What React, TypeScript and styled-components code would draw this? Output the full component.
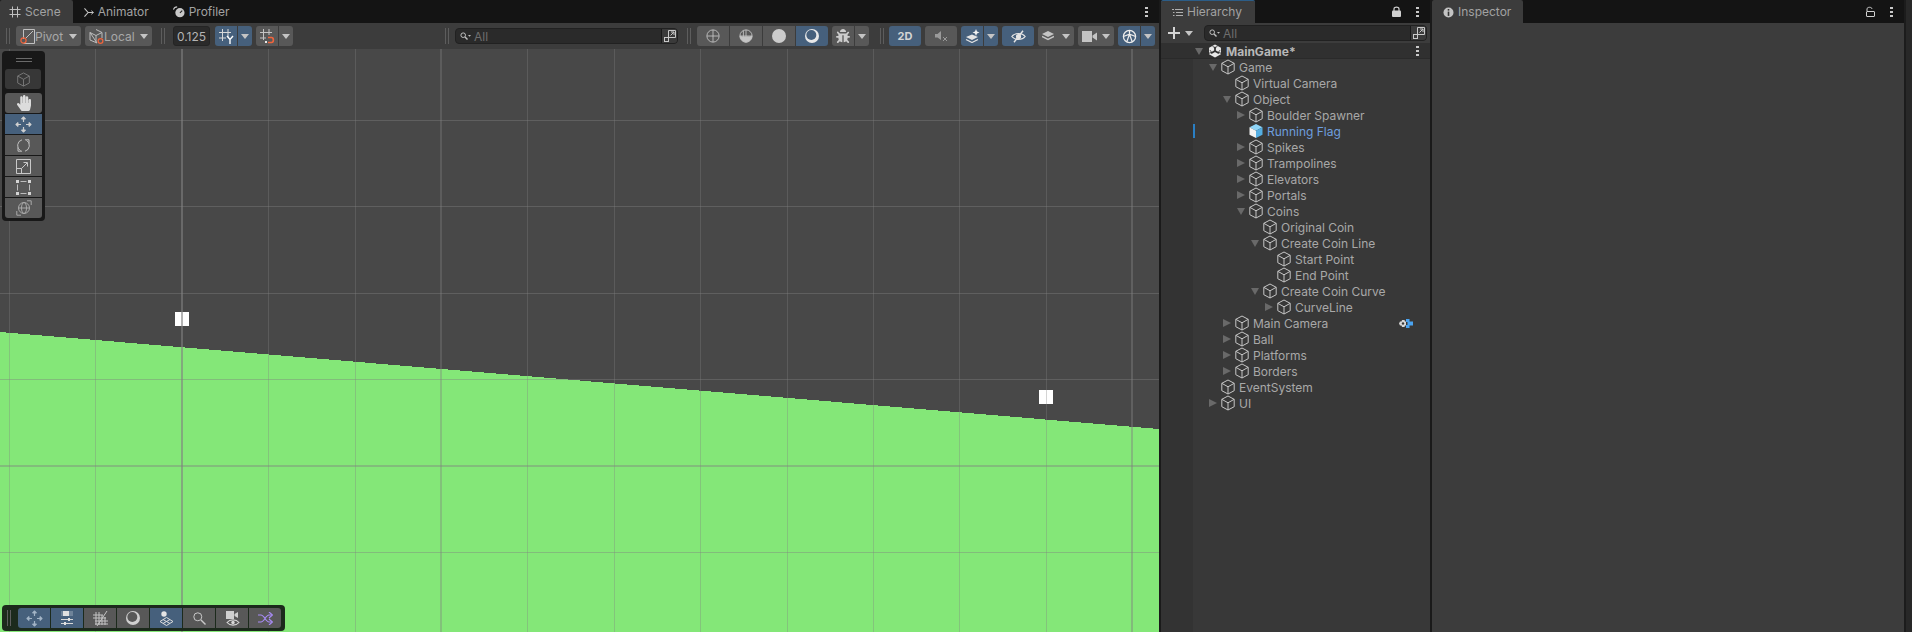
import React from 'react';
import styled, { createGlobalStyle } from 'styled-components';
import { FaHandPaper, FaBug } from 'react-icons/fa';

const Global = createGlobalStyle`
  html, body { margin: 0; padding: 0; background: #1a1a1a; overflow: hidden; }
  * { box-sizing: border-box; }
  body { font-family: Inter, "Noto Sans", sans-serif; font-size: 12px; }
`;

const Page = styled.div`
  display: flex; width: 1912px; height: 632px; background: #1a1a1a; color: #a8a8a8;
`;
const Panel = styled.section<{ $w: number; $ml?: number; $bg?: string }>`
  width: ${p => p.$w}px; margin-left: ${p => p.$ml ?? 0}px; height: 632px; display: flex; flex-direction: column;
  background: ${p => p.$bg ?? '#3c3c3c'}; flex: none;
`;
const EdgeStrip = styled.div`
  flex: 1; background: #282828; border-left: 2px solid #1c1c1c;
`;
const TabBar = styled.div`
  height: 23px; flex: none; background: #141414; display: flex; align-items: stretch; padding-right: 11px;
`;
const Tab = styled.div<{ $active?: boolean; $accent?: boolean; $pl?: number; $pr?: number }>`
  display: flex; align-items: center; gap: 4px; padding: 0 ${p => p.$pr ?? 12}px 0 ${p => p.$pl ?? 12}px;
  background: ${p => (p.$active ? '#3c3c3c' : 'transparent')};
  border-top: 1px solid ${p => (p.$accent ? '#2c5d87' : 'transparent')};
  border-radius: 2px 2px 0 0;
  color: #a2a2a2; font-size: 12px; line-height: 1;
`;
const TabActions = styled.div`
  margin-left: auto; display: flex; align-items: center; gap: 15px; color: #c0c0c0;
`;
const Toolbar = styled.div`
  height: 26px; flex: none; display: flex; align-items: center; background: #3c3c3c; padding-left: 6px;
`;
const Grip = styled.div<{ $ml?: number; $mr?: number }>`
  width: 4px; height: 16px; flex: none; margin: 0 ${p => p.$mr ?? 0}px 0 ${p => p.$ml ?? 0}px;
  border-left: 1px solid #5d5d5d; border-right: 1px solid #5d5d5d;
`;
const Spacer = styled.div<{ $w?: number }>` flex: ${p => (p.$w ? `0 0 ${p.$w}px` : '1')}; `;
const Btn = styled.div<{ $w?: number; $on?: boolean; $ml?: number; $square?: string }>`
  height: 20px; flex: none; width: ${p => (p.$w ? `${p.$w}px` : 'auto')}; margin-left: ${p => p.$ml ?? 0}px;
  background: ${p => (p.$on ? '#46607c' : '#585858')}; border-radius: ${p => p.$square ?? '3px'};
  display: flex; align-items: center; justify-content: center; color: #c8c8c8; font-size: 12px;
`;
const LabelBtn = styled(Btn)`
  justify-content: flex-start; padding-left: 4px; color: #a8a8a8;
`;
const CaretSlot = styled.span`
  margin-left: auto; margin-right: 4px; display: flex;
`;
const TwoD = styled.span` font-weight: 700; font-size: 11px; color: #d4d4d4; `;
const NumField = styled.div`
  width: 37px; height: 20px; flex: none; margin-left: 8px; background: #2a2a2a; border: 1px solid #242424; border-radius: 3px;
  display: flex; align-items: center; justify-content: center; color: #b4b4b4; font-size: 12px;
`;
const Split = styled.div<{ $ml?: number }>`
  display: flex; flex: none; margin-left: ${p => p.$ml ?? 0}px; gap: 1px;
`;
const Seg = styled.div<{ $ml?: number }>`
  display: flex; flex: none; gap: 1px; margin-left: ${p => p.$ml ?? 0}px;
`;
const SearchBox = styled.div<{ $w: number; $ml?: number }>`
  width: ${p => p.$w}px; height: 16px; flex: none; margin-left: ${p => p.$ml ?? 0}px;
  background: #2a2a2a; border: 1px solid #212121; border-radius: 4px; display: flex; align-items: center; padding-left: 4px;
  color: #6e6e6e; font-size: 12px; gap: 3px;
`;
const SearchPop = styled.span`
  margin-left: auto; width: 16px; height: 100%; border-left: 1px solid #191919; background: #3a3a3a; display: flex;
  align-items: center; justify-content: center; color: #c4c4c4; border-radius: 0 3px 3px 0;
`;
const SceneView = styled.div`
  position: relative; flex: 1; background: #484848; overflow: hidden;
`;
const SceneCanvas = styled.svg` display: block; `;
const ToolStrip = styled.div`
  position: absolute; left: 2px; top: 2px; width: 43px; height: 170px; background: #181818; border-radius: 4px; padding: 0 3px;
`;
const StripHandle = styled.div`
  height: 18px; display: flex; flex-direction: column; justify-content: center; gap: 2px; align-items: center;
  &::before, &::after { content: ''; width: 16px; height: 1px; background: #6a6a6a; }
`;
const ToolColumn = styled.div`
  display: flex; flex-direction: column; gap: 1px; margin-top: 4px;
`;
const DisabledBtn = styled(Btn)` background: #373737; color: #717171; `;
const OverlayBar = styled.div`
  position: absolute; left: 2px; bottom: 1px; height: 26px; width: 283px; background: #1c2a1c; border-radius: 4px;
  display: flex; align-items: center; padding-left: 5px; gap: 1px;
`;
const HierBar = styled.div`
  height: 20px; flex: none; background: #3c3c3c; display: flex; align-items: center; padding-left: 7px;
`;
const PlusBtn = styled.div`
  display: flex; align-items: center; gap: 5px; color: #d4d4d4; width: 36px;
`;
const SceneHeader = styled.div`
  height: 16px; flex: none; background: #303030; display: flex; align-items: center; padding: 0 11px 0 32px;
  color: #b8b8b8; font-weight: 700; font-size: 12px; box-shadow: inset 0 -1px #2a2a2a;
`;
const TreeWrap = styled.div` flex: 1; display: flex; background: #383838; `;
const Gutter = styled.div` width: 32px; background: #333333; flex: none; `;
const Tree = styled.div` flex: 1; display: flex; flex-direction: column; `;
const Row = styled.div<{ $depth: number; $prefab?: boolean }>`
  position: relative; height: 16px; display: flex; align-items: center; padding-left: ${p => p.$depth * 14}px; padding-right: 11px;
  color: ${p => (p.$prefab ? '#6f9fdf' : '#a8a8a8')}; font-size: 12px; white-space: nowrap;
`;
const ChangeBar = styled.span`
  position: absolute; left: 0; top: 1px; width: 2px; height: 14px; background: #2a7fc4;
`;
const ArrowSlot = styled.span<{ $w?: number }>`
  width: ${p => p.$w ?? 13}px; height: 16px; flex: none; display: flex; align-items: center; padding-left: 2px;
`;
const RowLabel = styled.span<{ $ml?: number }>` margin-left: ${p => p.$ml ?? 3}px; `;
const RowEnd = styled.span<{ $mr?: number }>` margin-left: auto; margin-right: ${p => p.$mr ?? 0}px; display: flex; color: #c4c4c4; `;

const Ico: React.FC<{ s?: number; w?: number; h?: number; vb?: string; sw?: number; children: React.ReactNode; c?: string }> = ({ s = 14, w, h, vb = '0 0 16 16', sw = 1, c, children }) => (
  <svg width={w ?? s} height={h ?? s} viewBox={vb} fill="none" stroke={c ?? 'currentColor'} strokeWidth={sw} style={{ flex: 'none', display: 'block' }}>{children}</svg>
);

const Caret = ({ c = '#c4c4c4' }: { c?: string }) => (
  <svg width="8" height="5" viewBox="0 0 8 5" style={{ display: 'block', flex: 'none' }}><path d="M0 0H8L4 5Z" fill={c} /></svg>
);
const Cube = ({ s = 16, c = '#c6c6c6' }: { s?: number; c?: string }) => (
  <Ico s={s} c={c}><path d="M8 1 14.2 4.3V11.7L8 15 1.8 11.7V4.3ZM1.8 4.3 8 7.8 14.2 4.3M8 7.8V15" /></Ico>
);
const PrefabCube = () => (
  <svg width="16" height="16" viewBox="0 0 16 16" style={{ flex: 'none', display: 'block' }}>
    <path d="M8 1 14.5 4.3 8 7.8 1.5 4.3Z" fill="#8fd5f7" />
    <path d="M1.5 4.3 8 7.8V15L1.5 11.7Z" fill="#f2f2f2" />
    <path d="M14.5 4.3 8 7.8V15L14.5 11.7Z" fill="#55aee2" />
  </svg>
);
const UnityLogo = () => (
  <svg width="14" height="14" viewBox="0 0 16 16" style={{ flex: 'none', display: 'block' }}>
    <path d="M8 .5 14.8 4.2V11.8L8 15.5 1.2 11.8V4.2Z" fill="#e8e8e8" />
    <path d="M8 8V3M8 8 3.5 10.7M8 8 12.5 10.7" stroke="#303030" strokeWidth="2" />
    <path d="M5.3 2.3 8 5 10.7 2.3M2.3 7 4.2 9.6 1 10.6M13.7 7 11.8 9.6 15 10.6" stroke="#303030" strokeWidth="1" fill="none" />
  </svg>
);
const RightTri = () => <svg width="8" height="8" viewBox="0 0 8 8" style={{ display: 'block' }}><path d="M0 0 8 4 0 8Z" fill="#696969" /></svg>;
const DownTri = () => <svg width="8" height="7" viewBox="0 0 8 7" style={{ display: 'block' }}><path d="M0 0H8L4 7Z" fill="#696969" /></svg>;
const Dots = () => (
  <svg width="3" height="12" viewBox="0 0 3 12" style={{ display: 'block', flex: 'none' }}>
    <rect y="1" width="3" height="2" fill="#c8c8c8" /><rect y="5" width="3" height="2" fill="#c8c8c8" /><rect y="9" width="3" height="2" fill="#c8c8c8" />
  </svg>
);
const SearchGlass = () => (
  <Ico w={11} h={9} vb="0 0 11 9" c="#c0c0c0"><circle cx="3.2" cy="3.2" r="2.3" /><path d="M5 5 7.5 7.5" strokeWidth="1.4" /><path d="M8 3H11L9.5 4.8Z" fill="#c0c0c0" stroke="none" /></Ico>
);
const PopOut = () => (
  <Ico s={12} vb="0 0 12 12" c="#c8c8c8"><path d="M4.5 .5H11.5V7.5H4.5ZM6.5 5.5 9.8 2.2M7 2H10V5" /><rect x=".5" y="7.5" width="4" height="4" fill="#3a3a3a" /></Ico>
);
const PivotIcon = () => (
  <svg width="15" height="15" viewBox="0 0 15 15" fill="none" style={{ flex: 'none' }}>
    <path d="M3.5 .5H14.5V14.5H3.5" stroke="#c0c0c0" /><path d="M3.5 .5V10M5.5 9.5 13 2" stroke="#c0c0c0" />
    <circle cx="3.5" cy="11.5" r="2.6" stroke="#f0643c" strokeWidth="1.2" />
  </svg>
);
const LocalIcon = () => (
  <svg width="15" height="15" viewBox="0 0 15 15" fill="none" style={{ flex: 'none' }}>
    <path d="M7 .5 13 3.5V9M8 14 1 11V3.5ZM1 3.5 7 6.5 13 3.5M7 6.5V13" stroke="#bdbdbd" />
    <circle cx="11.5" cy="12" r="2.4" stroke="#f0643c" strokeWidth="1.2" />
  </svg>
);
const GridIcon = ({ s = 12 }: { s?: number }) => (
  <Ico s={s} vb="0 0 12 12" c="#c0c0c0"><path d="M3.5 .5V11.5M8.5 .5V11.5M.5 3.5H11.500M.5 8.5H11.500" /></Ico>
);
const AnimatorIcon = () => (
  <Ico w={10} h={11} vb="0 0 11 11" c="#c4c4c4"><path d="M.5 1 4.5 5.5.5 10M4.5 5.5H10" strokeWidth="1.2" /><path d="M8 3.5 10.5 5.5 8 7.5" /></Ico>
);
const ProfilerIcon = () => (
  <svg width="12" height="12" viewBox="0 0 13 12" style={{ flex: 'none', display: 'block' }}>
    <circle cx="7.5" cy="6.8" r="5" fill="#c8c8c8" /><path d="M7.5 7 10 4.5" stroke="#222" strokeWidth="1.2" />
    <path d="M.5 3.5C1 1.5 2.5.5 4.5.5" stroke="#c8c8c8" fill="none" strokeWidth="1.2" />
  </svg>
);
const ListIcon = () => (
  <Ico w={11} h={9} vb="0 0 11 9" c="#b0b0b0"><path d="M3 1.5H11M4 4.5H11M4 7.5H11" /><path d="M0 1.5H2M1 4.5H2.5M1 7.5H2.5" /></Ico>
);
const LockIcon = () => (
  <svg width="9" height="11" viewBox="0 0 9 11" style={{ display: 'block' }}><rect y="4.5" width="9" height="6.5" rx="1" fill="#d0d0d0" /><path d="M2 5V3C2 .5 7 .5 7 3V5" stroke="#d0d0d0" strokeWidth="1.2" fill="none" /></svg>
);
const UnlockIcon = () => (
  <svg width="9" height="11" viewBox="0 0 9 11" style={{ display: 'block' }}><rect x=".5" y="5.5" width="8" height="5" rx=".5" fill="none" stroke="#d0d0d0" /><path d="M1 5V3C1 .7 6 .7 6 3" stroke="#d0d0d0" fill="none" /></svg>
);
const InfoIcon = () => (
  <svg width="11" height="11" viewBox="0 0 11 11" style={{ flex: 'none', display: 'block' }}>
    <circle cx="5.5" cy="5.5" r="5" fill="#c4c4c4" /><rect x="4.7" y="2" width="1.6" height="1.6" fill="#333" /><rect x="4.7" y="4.6" width="1.6" height="4.3" fill="#333" />
  </svg>
);
const SnapIcon = () => (
  <svg width="15" height="15" viewBox="0 0 15 15" fill="none"><path d="M3.5 0V12M9 0V8M0 3.5H12M0 9H7" stroke="#d8d8d8" /><path d="M8 7 11 10.5 14 7M11 10.5V15" stroke="#ffffff" strokeWidth="1.4" /></svg>
);
const MagnetIcon = () => (
  <svg width="15" height="15" viewBox="0 0 15 15" fill="none"><path d="M3.5 0V11M9 0V6M0 3.5H12M0 9H6" stroke="#c4c4c4" /><path d="M8 8.5H11.5C14 8.5 14 13.5 11.5 13.5H8" stroke="#f0643c" strokeWidth="1.6" /><rect x="5" y="12" width="2" height="2" fill="#e8e8e8" /></svg>
);
const GlobeWire = () => (
  <Ico s={14} c="#c4c4c4"><circle cx="8" cy="8" r="7" /><path d="M8 1V15M1.3 8H14.7" /></Ico>
);
const GlobeHalf = () => (
  <Ico s={14} c="#c4c4c4"><circle cx="8" cy="8" r="7" /><path d="M1.3 8C4 9 4 9 8 9V15A7 7 0 0 1 1.3 8Z" fill="#c4c4c4" /><path d="M8 9C12 9 12 9 14.7 8A7 7 0 0 1 8 15Z" fill="#c4c4c4" /><path d="M8 1V9M5 1.800V9M1.300 8H14.700" /></Ico>
);
const Solid = () => <svg width="14" height="14" viewBox="0 0 14 14" style={{ display: 'block' }}><circle cx="7" cy="7" r="7" fill="#cccccc" /></svg>;
const Crescent = ({ c = '#e8e8e8', bg = '#46607c' }: { c?: string; bg?: string }) => (
  <svg width="14" height="14" viewBox="0 0 14 14" style={{ display: 'block' }}><circle cx="7" cy="7" r="7" fill={c} /><circle cx="6.3" cy="6" r="5" fill={bg} /></svg>
);
const SpeakerOff = () => (
  <Ico s={13} vb="0 0 13 13" c="#9a9a9a"><path d="M0 4H2.5L6 1V10L2.5 7.5H0Z" fill="#9a9a9a" stroke="none" /><path d="M8 7 12 11M12 7 8 11" /></Ico>
);
const FxIcon = () => (
  <svg width="15" height="14" viewBox="0 0 15 14" style={{ display: 'block' }}>
    <path d="M1 8 7 5.5 13 8 7 11Z" fill="#e4e4e4" /><path d="M1 10.5 7 13.5 13 10.5" stroke="#e4e4e4" fill="none" strokeWidth="1.2" />
    <path d="M11 0 12 2.5 14.5 3.5 12 4.5 11 7 10 4.5 7.5 3.5 10 2.5Z" fill="#f2f2f2" />
  </svg>
);
const EyeSlash = () => (
  <Ico w={15} h={13} vb="0 0 15 13" c="#e6e6e6" sw={1.2}><path d="M.8 6.5C4 2.5 11 2.5 14.2 6.5 11 10.5 4 10.5.8 6.5Z" /><circle cx="7.5" cy="6.5" r="2" fill="#e6e6e6" /><path d="M12 .8 3 12.2" strokeWidth="1.4" /></Ico>
);
const LayersIcon = () => (
  <svg width="12" height="10" viewBox="0 0 12 10" style={{ display: 'block' }}><path d="M6 0 12 3 6 6 0 3Z" fill="#c4c4c4" /><path d="M0 5.5 6 8.5 12 5.5" fill="none" stroke="#c4c4c4" strokeWidth="1.5" /></svg>
);
const CameraIcon = ({ c = '#c4c4c4' }: { c?: string }) => (
  <svg width="15" height="11" viewBox="0 0 15 11" style={{ display: 'block' }}><rect width="10" height="11" fill={c} /><path d="M10.5 4.5 15 1.5V9.5L10.5 6.5Z" fill={c} /></svg>
);
const GizmoGlobe = () => (
  <Ico s={15} c="#ececec" sw={1.4}><circle cx="8" cy="8" r="6.5" /><path d="M1.5 8 8 5.5 14.5 8M8 1.5V5.5M5 14 8 5.5 11 14" /></Ico>
);
const MoveArrows = ({ c = '#d0d0d0' }: { c?: string }) => (
  <Ico s={17} vb="0 0 17 17" c={c}><path d="M8.5 1V6M8.5 11V16M1 8.5H6M11 8.5H16" strokeWidth="1.2" /><path d="M6.5 3 8.5 .7 10.5 3ZM6.5 14 8.5 16.3 10.5 14ZM3 6.5.7 8.5 3 10.5ZM14 6.5 16.3 8.5 14 10.5Z" fill={c} /></Ico>
);
const RotateIcon = () => (
  <Ico s={15} vb="0 0 15 15" c="#c0c0c0"><path d="M6 1.8A6 6 0 0 0 4.500 12.700" /><path d="M9 13.200A6 6 0 0 0 10.500 2.300" /><path d="M2 9.500V13.200H6M13 5.500V1.800H9" /></Ico>
);
const ScaleIcon = () => (
  <Ico s={15} vb="0 0 15 15" c="#c8c8c8"><path d="M.5.5H14.5V14.5H.5ZM.5 9.500H5.500V14.500M5.500 9.500 11 4M7.500 3.500H11.500V7.500" /></Ico>
);
const RectIcon = () => (
  <svg width="15" height="15" viewBox="0 0 15 15" style={{ display: 'block' }}>
    <path d="M1.500 4.500V10.500M13.500 4.500V10.500M4.500 1.500H10.500M4.500 13.500H10.500" stroke="#bdbdbd" fill="none" />
    <rect width="3" height="3" fill="#d4d4d4" /><rect x="12" width="3" height="3" fill="#d4d4d4" /><rect y="12" width="3" height="3" fill="#d4d4d4" /><rect x="12" y="12" width="3" height="3" fill="#d4d4d4" />
  </svg>
);
const TransformIcon = () => (
  <Ico s={16} c="#a8a8a8"><circle cx="8" cy="8" r="5.500" /><ellipse cx="8" cy="8" rx="2.500" ry="5.500" /><path d="M2.500 8H13.500" /><path d="M11 .8H15.200V5" /><path d="M.8 11V15.200H5" /></Ico>
);
const SlidersIcon = () => (
  <svg width="14" height="15" viewBox="0 0 14 15" style={{ display: 'block' }}>
    <rect x="1" width="12" height="5" fill="#6e8399" /><rect x="3" width="6" height="5" fill="#e0e0e0" />
    <path d="M1 8.500H13M1 12.500H13" stroke="#d8d8d8" /><rect x="8" y="7" width="2" height="3" fill="#e0e0e0" /><rect x="4" y="11" width="2" height="3" fill="#e0e0e0" />
  </svg>
);
const HatchIcon = () => (
  <Ico s={15} vb="0 0 15 15" c="#c4c4c4"><path d="M3 1V14M6 1V14M9 4V14M12 6V14M0 4H10M0 7H13M2 10H15M2 13H15M14 0 4 15" /></Ico>
);
const PointPlane = () => (
  <svg width="15" height="15" viewBox="0 0 15 15" fill="none" style={{ display: 'block' }}>
    <circle cx="5" cy="3" r="2.700" fill="#e4e4e4" /><path d="M7.500 6.500 14 10.500 7.500 14.500 1 10.500ZM4 8.500 11 12.500M11 8.500 4 12.500" stroke="#dcdcdc" />
  </svg>
);
const Magnifier = () => (
  <Ico s={13} vb="0 0 13 13" c="#c8c8c8"><circle cx="4.800" cy="4.800" r="4" /><path d="M8 8 12.500 12.500" strokeWidth="1.400" /></Ico>
);
const CamEye = () => (
  <svg width="15" height="15" viewBox="0 0 15 15" style={{ display: 'block' }}>
    <rect x="1" width="8" height="8" fill="#cfcfcf" /><path d="M9.500 3 13 1V7L9.500 5Z" fill="#cfcfcf" />
    <path d="M2 11.500C5 8 11 8 14 11.500 11 15 5 15 2 11.500Z" fill="#585858" stroke="#d8d8d8" strokeWidth="1.100" /><circle cx="8" cy="11.500" r="1.700" fill="#d8d8d8" />
  </svg>
);
const ShuffleIcon = () => (
  <Ico w={15} h={13} vb="0 0 15 13" c="#a78bf5" sw={1.200}><path d="M0 3H3C6 3 8 10 11 10H14M0 10H3C6 10 8 3 11 3H14" /><path d="M11 0 14.500 3 11 6M11 7 14.500 10 11 13" /></Ico>
);
const ScriptBadge = () => (
  <svg width="14" height="9" viewBox="0 0 14 9" style={{ display: 'block' }}>
    <path d="M1 2.500H2.500L3 1H5.500L6 2.500H7V6.500H6L5.500 8H3L2.500 6.500H1L0 4.500Z" fill="#d8d8d8" />
    <circle cx="4" cy="4.500" r="1.200" fill="#383838" />
    <path d="M7 0H10.500V2.500H14V6.500H10.500V9H7V6H8.500V3H7Z" fill="#4aa3f0" />
  </svg>
);

type Node = { name: string; depth: number; arrow?: 'open' | 'closed'; prefab?: boolean; badge?: boolean };
const nodes: Node[] = [
  { name: 'Game', depth: 1, arrow: 'open' },
  { name: 'Virtual Camera', depth: 2 },
  { name: 'Object', depth: 2, arrow: 'open' },
  { name: 'Boulder Spawner', depth: 3, arrow: 'closed' },
  { name: 'Running Flag', depth: 3, prefab: true },
  { name: 'Spikes', depth: 3, arrow: 'closed' },
  { name: 'Trampolines', depth: 3, arrow: 'closed' },
  { name: 'Elevators', depth: 3, arrow: 'closed' },
  { name: 'Portals', depth: 3, arrow: 'closed' },
  { name: 'Coins', depth: 3, arrow: 'open' },
  { name: 'Original Coin', depth: 4 },
  { name: 'Create Coin Line', depth: 4, arrow: 'open' },
  { name: 'Start Point', depth: 5 },
  { name: 'End Point', depth: 5 },
  { name: 'Create Coin Curve', depth: 4, arrow: 'open' },
  { name: 'CurveLine', depth: 5, arrow: 'closed' },
  { name: 'Main Camera', depth: 2, arrow: 'closed', badge: true },
  { name: 'Ball', depth: 2, arrow: 'closed' },
  { name: 'Platforms', depth: 2, arrow: 'closed' },
  { name: 'Borders', depth: 2, arrow: 'closed' },
  { name: 'EventSystem', depth: 1 },
  { name: 'UI', depth: 1, arrow: 'closed' },
];

const gridStep = 86.4;
const vLines = Array.from({ length: 14 }, (_, i) => Math.round(9 + i * gridStep));
const hLines = Array.from({ length: 6 }, (_, i) => Math.round(120 + i * gridStep) - 49);
const majorV: Record<number, number> = { 182: .6, 441: .36, 1132: .44 };
const majorH: Record<number, number> = { 417: .42 };

const Scene = () => (
  <SceneCanvas width="1159" height="583" viewBox="0 0 1159 583" shapeRendering="crispEdges">
    <polygon points="0,283 1159,380 1159,583 0,583" fill="#84e778" />
    <rect x="175" y="263" width="14" height="14" fill="#ffffff" />
    <rect x="1039" y="341" width="14" height="14" fill="#ffffff" />
    {vLines.map(x => (
      <rect key={x} x={majorV[x] ? x - 1 : x} y="0" width={majorV[x] ? 2 : 1} height="583" fill={`rgba(128,128,128,${majorV[x] ?? .34})`} />
    ))}
    {hLines.map(y => (
      <rect key={y} x="0" y={majorH[y] ? y - 1 : y} width="1159" height={majorH[y] ? 2 : 1} fill={`rgba(128,128,128,${majorH[y] ?? .42})`} />
    ))}
  </SceneCanvas>
);

export default function App() {
  return (
    <Page>
      <Global />
      <Panel $w={1159}>
        <TabBar>
          <Tab $active $pl={9} $pr={12}><GridIcon />Scene</Tab>
          <Tab $pl={11}><AnimatorIcon />Animator</Tab>
          <Tab $pl={12}><ProfilerIcon />Profiler</Tab>
          <TabActions><Dots /></TabActions>
        </TabBar>
        <Toolbar>
          <Grip $mr={6} />
          <LabelBtn $w={65}><PivotIcon />Pivot<CaretSlot><Caret /></CaretSlot></LabelBtn>
          <LabelBtn $w={67} $ml={4}><LocalIcon />Local<CaretSlot><Caret /></CaretSlot></LabelBtn>
          <Grip $ml={9} />
          <NumField>0.125</NumField>
          <Split $ml={5}>
            <Btn $w={22} $on $square="3px 0 0 3px"><SnapIcon /></Btn>
            <Btn $w={14} $on $square="0 3px 3px 0"><Caret /></Btn>
          </Split>
          <Split $ml={4}>
            <Btn $w={22} $square="3px 0 0 3px"><MagnetIcon /></Btn>
            <Btn $w={14} $square="0 3px 3px 0"><Caret /></Btn>
          </Split>
          <Spacer />
          <Grip $mr={6} />
          <SearchBox $w={223}><SearchGlass /><span>All</span><SearchPop><PopOut /></SearchPop></SearchBox>
          <Grip $ml={9} />
          <Seg $ml={6}>
            <Btn $w={32} $square="3px 0 0 3px"><GlobeWire /></Btn>
            <Btn $w={32} $square="0"><GlobeHalf /></Btn>
            <Btn $w={32} $square="0"><Solid /></Btn>
            <Btn $w={32} $on $square="0 3px 3px 0"><Crescent /></Btn>
          </Seg>
          <Split $ml={4}>
            <Btn $w={22} $square="3px 0 0 3px"><FaBug size={14} color="#cccccc" /></Btn>
            <Btn $w={14} $square="0 3px 3px 0"><Caret /></Btn>
          </Split>
          <Grip $ml={11} />
          <Btn $w={32} $on $ml={5}><TwoD>2D</TwoD></Btn>
          <Btn $w={32} $ml={4}><SpeakerOff /></Btn>
          <Split $ml={4}>
            <Btn $w={22} $on $square="3px 0 0 3px"><FxIcon /></Btn>
            <Btn $w={14} $on $square="0 3px 3px 0"><Caret /></Btn>
          </Split>
          <Btn $w={32} $on $ml={4}><EyeSlash /></Btn>
          <LabelBtn $w={36} $ml={4}><LayersIcon /><CaretSlot><Caret /></CaretSlot></LabelBtn>
          <LabelBtn $w={36} $ml={4}><CameraIcon /><CaretSlot><Caret /></CaretSlot></LabelBtn>
          <Split $ml={4}>
            <Btn $w={22} $on $square="3px 0 0 3px"><GizmoGlobe /></Btn>
            <Btn $w={14} $on $square="0 3px 3px 0"><Caret /></Btn>
          </Split>
          <Spacer $w={4} />
        </Toolbar>
        <SceneView>
          <Scene />
          <ToolStrip>
            <StripHandle />
            <DisabledBtn $w={36}><Cube s={15} c="#7a7a7a" /></DisabledBtn>
            <ToolColumn>
              <Btn $w={37}><FaHandPaper size={16} color="#dcdcdc" /></Btn>
              <Btn $w={37} $on $square="0"><MoveArrows /></Btn>
              <Btn $w={37} $square="0"><RotateIcon /></Btn>
              <Btn $w={37} $square="0"><ScaleIcon /></Btn>
              <Btn $w={37} $square="0"><RectIcon /></Btn>
              <Btn $w={37} $square="0 0 3px 3px"><TransformIcon /></Btn>
            </ToolColumn>
          </ToolStrip>
          <OverlayBar>
            <Grip $mr={6} />
            <Btn $w={32} $on $square="3px 0 0 3px"><MoveArrows c="#a3b4c6" /></Btn>
            <Btn $w={32} $on $square="0"><SlidersIcon /></Btn>
            <Btn $w={32} $square="0"><HatchIcon /></Btn>
            <Btn $w={32} $square="0"><Crescent c="#d0d0d0" bg="#585858" /></Btn>
            <Btn $w={32} $on $square="0"><PointPlane /></Btn>
            <Btn $w={32} $square="0"><Magnifier /></Btn>
            <Btn $w={32} $square="0"><CamEye /></Btn>
            <Btn $w={32} $square="0 3px 3px 0"><ShuffleIcon /></Btn>
          </OverlayBar>
        </SceneView>
      </Panel>
      <Panel $w={269} $ml={2} $bg="#383838">
        <TabBar>
          <Tab $active $accent $pl={11} $pr={13}><ListIcon />Hierarchy</Tab>
          <TabActions><LockIcon /><Dots /></TabActions>
        </TabBar>
        <HierBar>
          <PlusBtn>
            <Ico s={12} vb="0 0 12 12" sw={2}><path d="M6 0V12M0 6H12" /></Ico>
            <Caret />
          </PlusBtn>
          <SearchBox $w={223}><SearchGlass /><span>All</span><SearchPop><PopOut /></SearchPop></SearchBox>
        </HierBar>
        <SceneHeader>
          <ArrowSlot $w={15}><DownTri /></ArrowSlot>
          <UnityLogo />
          <RowLabel $ml={4}>MainGame*</RowLabel>
          <RowEnd><Dots /></RowEnd>
        </SceneHeader>
        <TreeWrap>
          <Gutter />
          <Tree>
            {nodes.map(n => (
              <Row key={n.name} $depth={n.depth} $prefab={n.prefab}>
                {n.prefab && <ChangeBar />}
                <ArrowSlot>
                  {n.arrow === 'open' && <DownTri />}
                  {n.arrow === 'closed' && <RightTri />}
                </ArrowSlot>
                {n.prefab ? <PrefabCube /> : <Cube />}
                <RowLabel>{n.name}</RowLabel>
                {n.badge && <RowEnd $mr={6}><ScriptBadge /></RowEnd>}
              </Row>
            ))}
          </Tree>
        </TreeWrap>
      </Panel>
      <Panel $w={472} $ml={2}>
        <TabBar>
          <Tab $active $pl={11} $pr={12}><InfoIcon />Inspector</Tab>
          <TabActions><UnlockIcon /><Dots /></TabActions>
        </TabBar>
      </Panel>
      <EdgeStrip />
    </Page>
  );
}
